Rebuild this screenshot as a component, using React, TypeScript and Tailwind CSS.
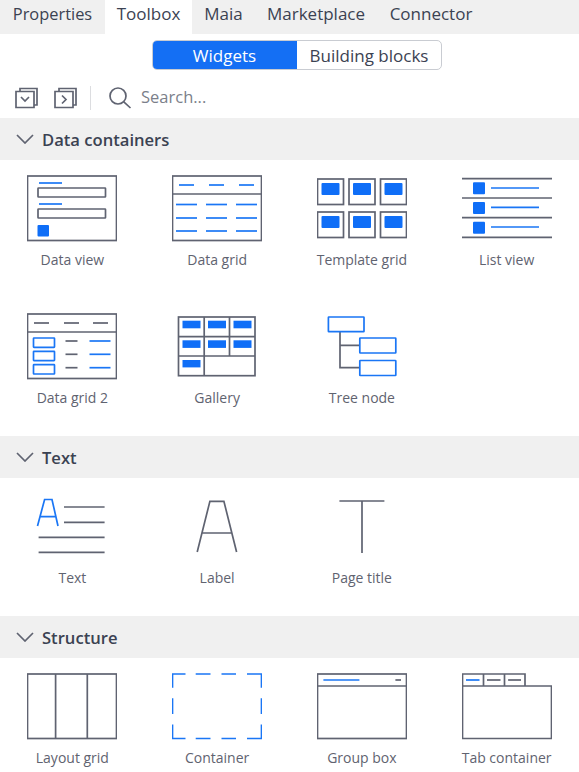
import type { ReactNode } from "react";

const GRAY = "#5f6371";
const BLUE = "#1a76f5";
const FILL = "#0f6ef7";

const Icon = ({ children }: { children: ReactNode }) => (
  <svg width="90" height="70" viewBox="0 0 90 70" fill="none" stroke={GRAY} strokeWidth="1.7" className="shrink-0">
    {children}
  </svg>
);

const HLines = ({ xs, ys, color }: { xs: [number, number][]; ys: number[]; color: string }) => (
  <g stroke={color}>
    {ys.map((y) =>
      xs.map(([a, b]) => <path key={`${a}-${y}`} d={`M${a} ${y}H${b}`} />)
    )}
  </g>
);

const DataView = () => (
  <Icon>
    <rect x="0.5" y="2" width="89" height="64.5" />
    <HLines xs={[[12, 35]]} ys={[9, 30]} color={BLUE} />
    <rect x="11" y="14" width="67.5" height="9" rx="0.5" />
    <rect x="11" y="35" width="67.5" height="9" rx="0.5" />
    <rect x="10.5" y="51" width="11.5" height="11.5" rx="1" fill={FILL} stroke="none" />
  </Icon>
);

const DataGrid = () => (
  <Icon>
    <rect x="0.5" y="2" width="89" height="64.5" />
    <path d="M0.5 20H89.5" />
    <HLines xs={[[7, 22], [37, 52], [67, 82]]} ys={[11]} color={BLUE} />
    <HLines xs={[[4, 25], [34, 55], [64, 85]]} ys={[30.5, 44, 57]} color={BLUE} />
  </Icon>
);

const TemplateGrid = () => (
  <Icon>
    {[5, 38].map((y) =>
      [0.5, 32, 63.5].map((x) => (
        <g key={`${x}-${y}`}>
          <rect x={x} y={y} width="26" height="25.5" />
          <rect x={x + 4} y={y + 4} width="18" height="12" rx="1" fill={FILL} stroke="none" />
        </g>
      ))
    )}
  </Icon>
);

const ListView = () => (
  <Icon>
    <HLines xs={[[0, 90]]} ys={[4.7, 24, 43.7, 63.3]} color={GRAY} />
    {[8.3, 28, 47.7].map((y) => (
      <rect key={y} x="11" y={y} width="12" height="12" rx="1" fill={FILL} stroke="none" />
    ))}
    <HLines xs={[[29, 77]]} ys={[14, 33.3, 53]} color={BLUE} />
  </Icon>
);

const DataGrid2 = () => (
  <Icon>
    <rect x="0.5" y="2" width="89" height="64.5" />
    <path d="M0.5 20H89.5" />
    <HLines xs={[[7, 22], [37, 52], [66, 81]]} ys={[11]} color={GRAY} />
    {[26, 39.3, 52.7].map((y) => (
      <rect key={y} x="6.5" y={y} width="21" height="9.3" rx="0.5" stroke={BLUE} />
    ))}
    <HLines xs={[[38.5, 50.5]]} ys={[29, 42.3, 55.7]} color={GRAY} />
    <HLines xs={[[62.5, 83.5]]} ys={[29, 42.3, 55.7]} color={BLUE} />
  </Icon>
);

const Gallery = () => (
  <Icon>
    <rect x="6.5" y="5" width="76.5" height="58.7" />
    <path d="M6.5 24.7H83M6.5 44H83M32.2 5V63.7M57.5 5V44" />
    {[8.7, 28.3].map((y) =>
      [10.5, 36, 61.5].map((x) => (
        <rect key={`${x}-${y}`} x={x} y={y} width="18" height="7.6" fill={FILL} stroke="none" />
      ))
    )}
    <rect x="10.5" y="48" width="18" height="7.4" fill={FILL} stroke="none" />
  </Icon>
);

const TreeNode = () => (
  <Icon>
    <path d="M23 20V55.7H43M23 33.3H43" />
    <g stroke={BLUE}>
      <rect x="11.4" y="5" width="35.6" height="14.7" rx="0.5" />
      <rect x="42.8" y="26" width="36" height="15" rx="0.5" />
      <rect x="42.8" y="48.5" width="36" height="15" rx="0.5" />
    </g>
  </Icon>
);

const TextIcon = () => (
  <Icon>
    <path d="M10.5 34L17.6 7.5H25L31 34M13 24.7H28.3" stroke={BLUE} />
    <HLines xs={[[37, 77.6]]} ys={[15, 30.3]} color={GRAY} />
    <HLines xs={[[11.6, 77.6]]} ys={[45.3, 60.3]} color={GRAY} />
  </Icon>
);

const LabelIcon = () => (
  <Icon>
    <path d="M25.2 60L37.9 9.3H51.9L64.6 60M29.9 41H59.6" />
  </Icon>
);

const PageTitle = () => (
  <Icon>
    <path d="M22.4 9H67.4M45 9V61" />
  </Icon>
);

const LayoutGrid = () => (
  <Icon>
    <rect x="0.5" y="2" width="89" height="64.5" />
    <path d="M28.6 2V66.5M60.3 2V66.5" />
  </Icon>
);

const ContainerIcon = () => (
  <Icon>
    <path
      stroke={BLUE}
      d="M0.5 15.7V2H13.5M23.7 2H38.5M49.5 2H64M75 2H89.5V15.7M89.5 26.3V42M89.5 52.5V66.5H75M64 66.5H49.5M38.5 66.5H23.7M13.5 66.5H0.5V52.5M0.5 42V26.3"
    />
  </Icon>
);

const GroupBox = () => (
  <Icon>
    <rect x="0.5" y="2" width="89" height="64.5" />
    <path d="M0.5 14H89.5" />
    <HLines xs={[[6.4, 42.4]]} ys={[8]} color={BLUE} />
    <HLines xs={[[78.4, 84]]} ys={[8]} color={GRAY} />
  </Icon>
);

const TabContainer = () => (
  <Icon>
    <path d="M0.5 14H89.5V66.5H0.5V2H63V14M21.5 2V14M42.5 2V14" />
    <HLines xs={[[4, 17.5]]} ys={[8]} color={BLUE} />
    <HLines xs={[[25, 38.5], [46, 59]]} ys={[8]} color={GRAY} />
  </Icon>
);

const sections = [
  {
    title: "Data containers",
    items: [
      { label: "Data view", icon: <DataView /> },
      { label: "Data grid", icon: <DataGrid /> },
      { label: "Template grid", icon: <TemplateGrid /> },
      { label: "List view", icon: <ListView /> },
      { label: "Data grid 2", icon: <DataGrid2 /> },
      { label: "Gallery", icon: <Gallery /> },
      { label: "Tree node", icon: <TreeNode /> },
    ],
  },
  {
    title: "Text",
    items: [
      { label: "Text", icon: <TextIcon /> },
      { label: "Label", icon: <LabelIcon /> },
      { label: "Page title", icon: <PageTitle /> },
    ],
  },
  {
    title: "Structure",
    items: [
      { label: "Layout grid", icon: <LayoutGrid /> },
      { label: "Container", icon: <ContainerIcon /> },
      { label: "Group box", icon: <GroupBox /> },
      { label: "Tab container", icon: <TabContainer /> },
    ],
  },
];

const tabs = [
  { name: "Properties", className: "w-[105px] text-[16.4px]" },
  { name: "Toolbox", className: "w-[87px] bg-white" },
  { name: "Maia", className: "w-[63px]" },
  { name: "Marketplace", className: "w-[122px]" },
  { name: "Connector", className: "w-[108px]" },
];

const App = () => {
  return (
    <main className="h-[772px] w-[579px] overflow-hidden bg-white font-['Open_Sans',sans-serif] text-[#3b4252]">
      {/* Tabs */}
      <div className="flex h-[34px] bg-[#f0f0f0] text-[17px] leading-[28px]">
        {tabs.map((tab) => (
          <div key={tab.name} className={`h-[34px] text-center ${tab.className}`}>
            {tab.name}
          </div>
        ))}
      </div>

      {/* Widgets / Building blocks */}
      <div className="flex justify-center pt-[6px] pl-[15px]">
        <div className="flex h-[30px] w-[290px] overflow-hidden rounded-[5px] border border-[#c9ccd2] text-[17px] leading-[29px]">
          <div className="-my-px -ml-px flex h-[30px] w-[145px] items-center justify-center bg-[#146ff4] text-white">
            Widgets
          </div>
          <div className="flex-1 text-center">Building blocks</div>
        </div>
      </div>

      {/* Toolbar */}
      <div className="flex h-[48px] items-center pt-[7px] pl-[15px]">
        <svg width="24" height="24" viewBox="0 0 24 24" fill="none" stroke={GRAY} strokeWidth="1.7">
          <path d="M5 5V2.5H22V19H19M3 5.5H19V21.5H1V5.5H3" />
          <path d="M6 11L10 15L14 11" />
        </svg>
        <svg width="24" height="24" viewBox="0 0 24 24" fill="none" stroke={GRAY} strokeWidth="1.7" className="ml-[15px]">
          <path d="M5 5V2.5H22V19H19M3 5.5H19V21.5H1V5.5H3" />
          <path d="M8 9.5L12 13.5L8 17.5" />
        </svg>
        <div className="ml-[12px] h-[24px] w-px bg-[#dcdde0]" />
        <svg width="24" height="24" viewBox="0 0 24 24" fill="none" stroke={GRAY} strokeWidth="1.7" className="ml-[17px]">
          <circle cx="10" cy="10" r="8" />
          <path d="M15.8 15.8L22.5 22" />
        </svg>
        <span className="ml-[9px] text-[16.5px] text-[#7b7f8a]">Search...</span>
      </div>

      {/* Sections */}
      {sections.map((section) => (
        <section key={section.title}>
          <div className="flex h-[42px] items-center bg-[#f0f0f0] pl-[16px]">
            <svg width="18" height="10" viewBox="0 0 18 10" fill="none" stroke={GRAY} strokeWidth="1.7">
              <path d="M1 1L9 9L17 1" />
            </svg>
            <span className="ml-[8px] pt-[2px] text-[16.6px] font-semibold">{section.title}</span>
          </div>
          <div className="grid grid-cols-4">
            {section.items.map((item) => (
              <div key={item.label} className="flex h-[138px] flex-col items-center pt-[14px]">
                {item.icon}
                <span className="mt-[6px] text-[14px] leading-[20px] text-[#5f6370]">{item.label}</span>
              </div>
            ))}
          </div>
        </section>
      ))}
    </main>
  );
};

export default App;
